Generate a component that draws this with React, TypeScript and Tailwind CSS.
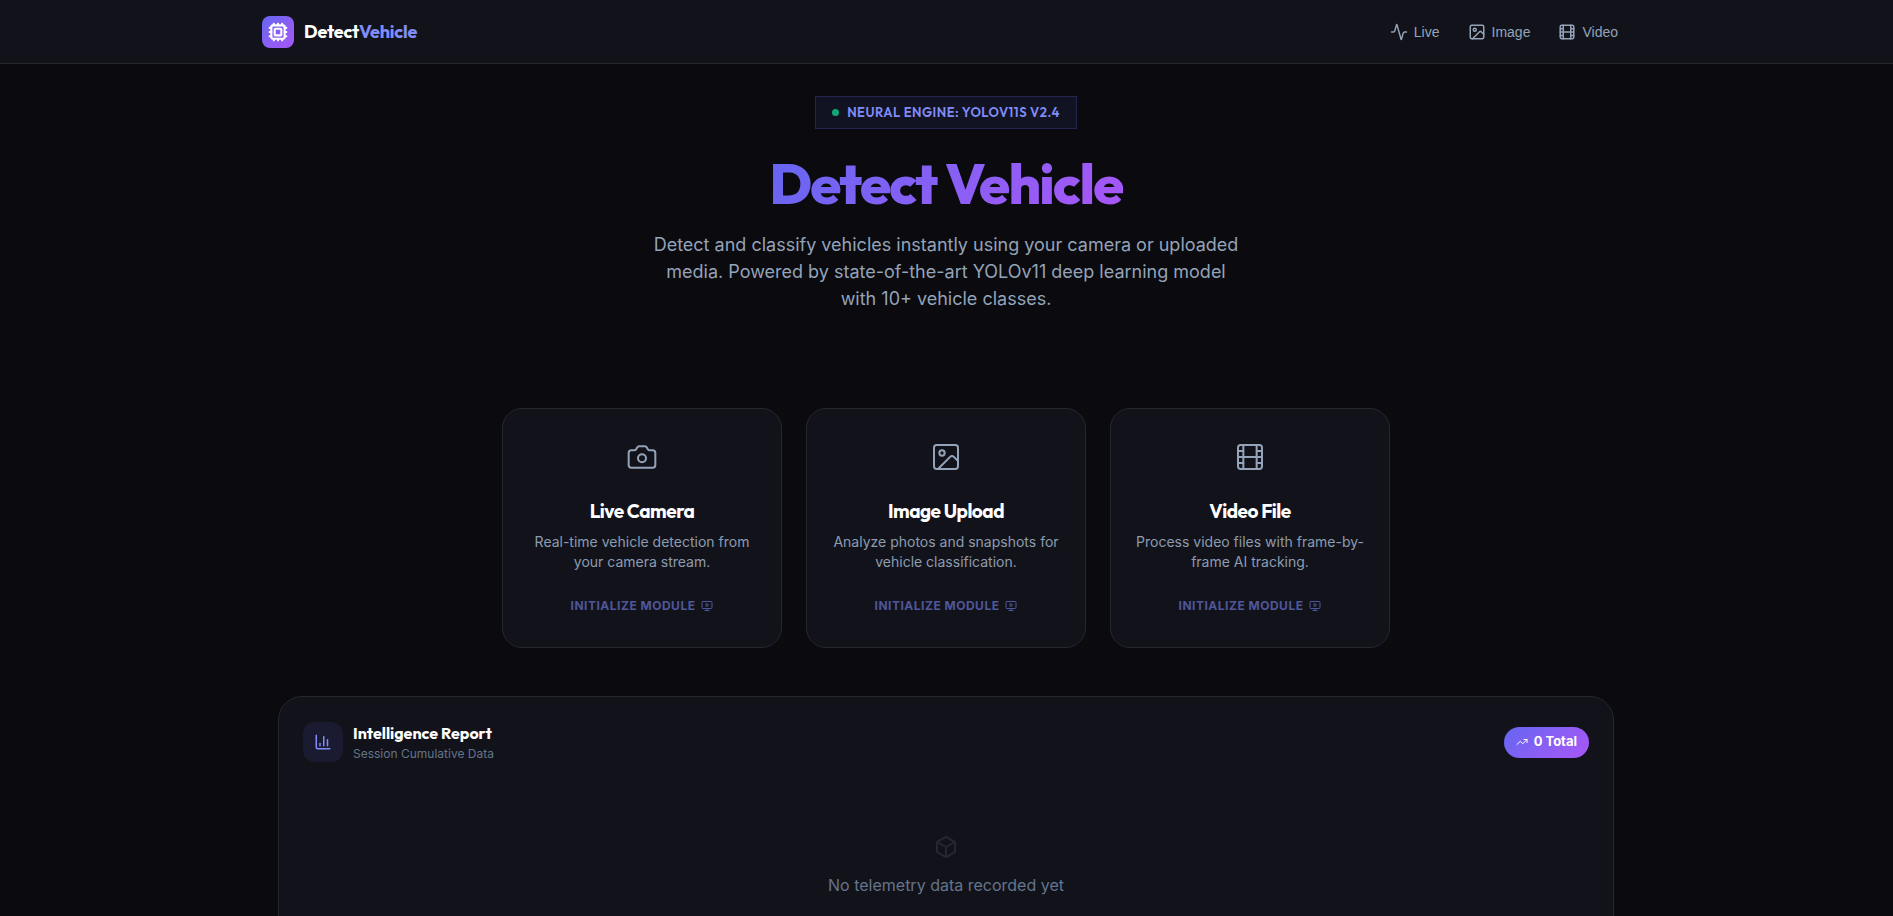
import React from "react";
import {
  Activity,
  Box,
  Camera,
  ChartColumn,
  Cpu,
  Film,
  Image as ImageIcon,
  LucideIcon,
  MonitorPlay,
  TrendingUp,
} from "lucide-react";

interface NavItem {
  label: string;
  href: string;
  icon: LucideIcon;
}

interface ModuleItem {
  title: string;
  description: string;
  icon: LucideIcon;
}

const navItems: NavItem[] = [
  { label: "Live", href: "#live", icon: Activity },
  { label: "Image", href: "#image", icon: ImageIcon },
  { label: "Video", href: "#video", icon: Film },
];

const modules: ModuleItem[] = [
  {
    title: "Live Camera",
    description: "Real-time vehicle detection from your camera stream.",
    icon: Camera,
  },
  {
    title: "Image Upload",
    description: "Analyze photos and snapshots for vehicle classification.",
    icon: ImageIcon,
  },
  {
    title: "Video File",
    description: "Process video files with frame-by-frame AI tracking.",
    icon: Film,
  },
];

const Header = () => (
  <header className="border-b border-[#26272d] bg-[#12131a] pr-px">
    <div className="mx-auto flex h-[63px] max-w-[1400px] items-center justify-between px-4">
      <a href="#" className="flex items-center gap-[10px]">
        <span className="flex h-8 w-8 items-center justify-center rounded-lg bg-linear-135 from-[#6366f1] to-[#a855f7]">
          <Cpu size={20} strokeWidth={2.5} className="text-white" />
        </span>
        <span className="font-['Outfit',Lato,sans-serif] text-lg font-bold tracking-[-0.01em] text-white">
          Detect<span className="text-[#818cf8]">Vehicle</span>
        </span>
      </a>

      <nav className="flex items-center gap-1">
        {navItems.map(({ label, href, icon: Icon }) => (
          <a
            key={label}
            href={href}
            className="flex items-center gap-[6px] px-3 py-2 font-['Liberation_Sans',sans-serif] text-sm text-[#94a3b8]"
          >
            <Icon size={18} />
            {label}
          </a>
        ))}
      </nav>
    </div>
  </header>
);

const Hero = () => (
  <section className="flex flex-col items-center pt-8 text-center">
    <div className="flex h-[33px] items-center gap-2 border border-[#25264f] bg-[#121322] px-4 font-['Outfit',Lato,sans-serif] text-[13px] font-semibold tracking-[0.5px] text-[#818cf8] uppercase">
      <span className="h-[7px] w-[7px] rounded-full bg-[#10a877]" />
      Neural Engine: YOLOv11s v2.4
    </div>
    <h1 className="mt-6 bg-linear-135 from-[#6366f1] to-[#a855f7] bg-clip-text font-['Outfit',Lato,sans-serif] text-[56px] leading-[62px] font-extrabold tracking-[-0.03em] text-transparent">
      Detect Vehicle
    </h1>
    <p className="mt-4 max-w-[600px] text-lg leading-[27px] text-[#94a3b8]">
      Detect and classify vehicles instantly using your camera or uploaded
      media. Powered by state-of-the-art YOLOv11 deep learning model with 10+
      vehicle classes.
    </p>
  </section>
);

const ModuleCard = ({ title, description, icon: Icon }: ModuleItem) => (
  <button
    type="button"
    className="flex min-h-60 flex-col items-center rounded-[20px] border border-[#26272d] bg-[#12131a] px-6 pt-8 pb-6 text-center"
  >
    <Icon size={32} strokeWidth={1.5} className="text-[#94a3b8]" />
    <span className="mt-6 font-['Outfit',Lato,sans-serif] text-[19px] leading-7 font-bold tracking-tight text-white">
      {title}
    </span>
    <span className="mt-[7px] text-sm leading-5 text-[#8d9bb0]">
      {description}
    </span>
    <span className="mt-[26px] flex items-center gap-[6px] text-xs font-bold tracking-[0.5px] text-[#50569a] uppercase">
      Initialize Module
      <MonitorPlay size={12} />
    </span>
  </button>
);

const Report = () => (
  <section className="rounded-3xl border border-[#26272d] bg-[#12131a] px-6 pt-6 pb-20">
    <div className="flex items-center justify-between">
      <div className="flex items-center gap-[10px]">
        <span className="flex h-10 w-10 items-center justify-center rounded-xl bg-[#1a1b30] text-[#818cf8]">
          <ChartColumn size={18} />
        </span>
        <div>
          <h2 className="font-['Outfit',Lato,sans-serif] text-base leading-6 font-bold text-white">
            Intelligence Report
          </h2>
          <p className="text-xs leading-[18px] text-[#64748b]">
            Session Cumulative Data
          </p>
        </div>
      </div>
      <span className="flex h-[31px] items-center gap-[6px] rounded-full bg-linear-135 from-[#6366f1] to-[#a855f7] px-3 text-[13px] font-bold text-white">
        <TrendingUp size={12} />0 Total
      </span>
    </div>

    <div className="flex flex-col items-center gap-[14px] pt-[72px]">
      <Box size={24} className="text-[#262731]" />
      <p className="text-base leading-6 text-[#64748b]">
        No telemetry data recorded yet
      </p>
    </div>
  </section>
);

export default function App() {
  return (
    <div className="min-h-screen bg-[#0a0a0f] font-['Inter',sans-serif]">
      <Header />
      <div className="pr-px">
        <main className="mx-auto max-w-[1400px] px-8 pb-6">
          <Hero />
          <div className="mx-auto mt-24 mb-12 grid max-w-[888px] gap-6 md:grid-cols-3">
            {modules.map((item) => (
              <ModuleCard key={item.title} {...item} />
            ))}
          </div>
          <Report />
        </main>
      </div>
    </div>
  );
}
